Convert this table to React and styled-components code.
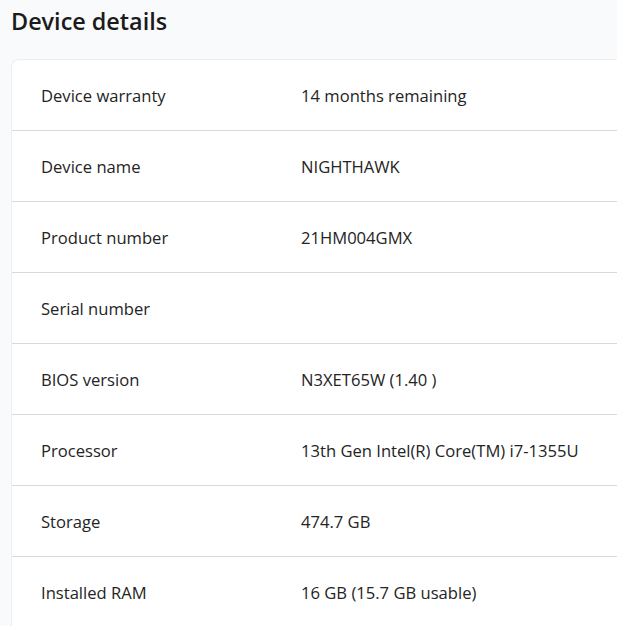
import React from 'react';
import styled, { createGlobalStyle } from 'styled-components';

const GlobalStyle = createGlobalStyle`
  html, body {
    margin: 0;
    padding: 0;
    background: #f9fafb;
    overflow: hidden;
  }
  body {
    font-family: "Open Sans", "Noto Sans", sans-serif;
    color: #1f1f1f;
  }
`;

const details = [
  { label: 'Device warranty', value: '14 months remaining' },
  { label: 'Device name', value: 'NIGHTHAWK' },
  { label: 'Product number', value: '21HM004GMX' },
  { label: 'Serial number', value: '' },
  { label: 'BIOS version', value: 'N3XET65W (1.40 )' },
  { label: 'Processor', value: '13th Gen Intel(R) Core(TM) i7-1355U' },
  { label: 'Storage', value: '474.7 GB' },
  { label: 'Installed RAM', value: '16 GB (15.7 GB usable)' },
];

const DeviceDetails = () => {
  return (
    <Page>
      <GlobalStyle />
      <Title>Device details</Title>
      <Card>
        {details.map((item) => (
          <Row key={item.label}>
            <Label>{item.label}</Label>
            <Value>{item.value}</Value>
          </Row>
        ))}
      </Card>
    </Page>
  );
};

const Page = styled.div`
  padding: 5px 0 0 11px;
`;

const Title = styled.h1`
  margin: 0 0 0 0;
  font-size: 23.4px;
  font-weight: 600;
  line-height: 32px;
  color: #1b1b1b;
  height: 54px;
`;

/* card runs on past the right edge of the window, so no right border */
const Card = styled.div`
  background: #ffffff;
  border: 1px solid #eceef1;
  border-right: none;
  border-radius: 8px 0 0 0;
`;

const Row = styled.div`
  display: grid;
  grid-template-columns: 260px 1fr;
  align-items: center;
  height: 70px;
  padding-left: 29px;
  border-bottom: 1px solid #d9d9d9;
  font-size: 16.6px;
  color: #242424;
`;

const Label = styled.span``;

const Value = styled.span`
  white-space: nowrap;
`;

export default DeviceDetails;
